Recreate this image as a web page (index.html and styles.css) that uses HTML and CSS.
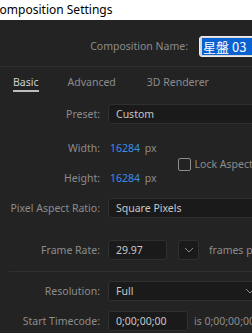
FILE: index.html
```html
<!DOCTYPE html>
<html lang="en">
<head>
  <meta charset="UTF-8" />
  <meta name="viewport" content="width=device-width, initial-scale=1.0"/>
  <title>Composition Settings</title>
  <link rel="stylesheet" href="styles.css">
</head>
<body>
  <header class="titlebar">
    <h1>Composition Settings</h1>
  </header>

  <main class="panel">
    <div class="name-row">
      <label class="name-label">Composition Name:</label>
      <div class="name-input"><span class="selected">星盤 03</span></div>
    </div>

    <nav class="tabs">
      <a class="tab active" href="#">Basic</a>
      <a class="tab" href="#">Advanced</a>
      <a class="tab" href="#">3D Renderer</a>
    </nav>

    <div class="row preset">
      <span class="label">Preset:</span>
      <div class="select wide">Custom</div>
    </div>

    <div class="dims">
      <div class="dims-list">
        <div class="row tall">
          <span class="label">Width:</span>
          <span class="value"><b>16284</b> px</span>
        </div>
        <div class="row tall">
          <span class="label">Height:</span>
          <span class="value"><b>16284</b> px</span>
        </div>
      </div>
      <div class="lock">
        <span class="checkbox"></span>
        <span>Lock Aspect Ratio</span>
      </div>
    </div>

    <div class="row par">
      <span class="label">Pixel Aspect Ratio:</span>
      <div class="select wide">Square Pixels</div>
    </div>

    <div class="row rate">
      <span class="label">Frame Rate:</span>
      <div class="field rate-field">29.97</div>
      <div class="field chev-btn">
        <svg width="10" height="6" viewBox="0 0 10 6"><path d="M1 1 L5 5 L9 1" fill="none" stroke="#8c8c8c" stroke-width="1"/></svg>
      </div>
      <span class="hint">frames per second</span>
    </div>

    <hr class="sep">

    <div class="row res">
      <span class="label">Resolution:</span>
      <div class="select wide">Full
        <svg class="chev" width="10" height="6" viewBox="0 0 10 6"><path d="M1 1 L5 5 L9 1" fill="none" stroke="#8c8c8c" stroke-width="1"/></svg>
      </div>
    </div>

    <div class="row timecode">
      <span class="label">Start Timecode:</span>
      <div class="field tc-field">0;00;00;00</div>
      <span class="hint">is 0;00;00;00 Base 30drop</span>
    </div>
  </main>
</body>
</html>
```

FILE: styles.css
```css
* {
  margin: 0;
  padding: 0;
  box-sizing: border-box;
}

html, body {
  width: 252px;
  height: 333px;
  overflow: hidden;
}

body {
  font-family: 'Noto Sans', 'Noto Sans CJK TC', sans-serif;
  font-size: 10.5px;
  background-color: #232323;
  color: #8c8c8c;
}

.titlebar {
  height: 20px;
  background: #fff;
  overflow: hidden;
}

.titlebar h1 {
  font-weight: normal;
  font-size: 12px;
  color: #000;
  line-height: 19px;
  margin-left: -8px;
  white-space: nowrap;
}

.panel {
  white-space: nowrap;
}

.name-row {
  display: flex;
  align-items: center;
  height: 47px;
  padding-top: 6px;
  border-bottom: 1px solid #2e2e2e;
}

.name-label {
  width: 188px;
  text-align: right;
  flex-shrink: 0;
}

.name-input {
  margin-left: 11px;
  width: 80px;
  flex-shrink: 0;
  height: 21px;
  background: #d6d6d6;
  border: 1px solid #eeeeee;
  border-radius: 3px;
  padding: 1px 2px;
}

.selected {
  display: inline-block;
  background: #0a62d2;
  color: #fff;
  font-size: 13px;
  line-height: 17px;
  padding: 0 6px 0 1px;
  font-family: 'Noto Sans CJK TC', sans-serif;
}

.tabs {
  display: flex;
  height: 37px;
  padding: 8px 0 0 13px;
}

.tab {
  color: #8c8c8c;
  text-decoration: none;
  height: 15px;
  line-height: 15px;
}

.tab + .tab {
  margin-left: 29px;
}

.tab:nth-child(3) {
  margin-left: 31px;
}

.tab.active {
  color: #d0d0d0;
  border-bottom: 2px solid #bdbdbd;
  height: 17px;
}

.row {
  display: flex;
  align-items: center;
  height: 20px;
}

.label {
  width: 100px;
  flex-shrink: 0;
  text-align: right;
  margin-right: 8px;
}

.select, .field {
  height: 20px;
  background: #1a1a1a;
  border: 1px solid #2f2f2f;
  border-radius: 3px;
  color: #c6c6c6;
  padding: 0 7px;
  line-height: 18px;
  flex-shrink: 0;
}

.wide {
  width: 160px;
  position: relative;
}

.chev {
  position: absolute;
  left: 136px;
  top: 6px;
}

.dims {
  display: flex;
  align-items: center;
  margin-top: 9px;
}

.row.tall {
  height: 30px;
}

.value {
  color: #8c8c8c;
  margin-left: 2px;
}

.value b {
  font-weight: normal;
  color: #3a8ee6;
  margin-right: 2px;
}

.lock {
  display: flex;
  align-items: center;
  margin-left: 21px;
  margin-top: 2px;
}

.checkbox {
  width: 13px;
  height: 13px;
  border: 1px solid #8c8c8c;
  border-radius: 2px;
  margin-right: 4px;
}

.par {
  margin-top: 5px;
}

.rate {
  margin-top: 22px;
}

.rate-field {
  width: 59px;
}

.chev-btn {
  width: 21px;
  margin-left: 11px;
  padding: 0;
  display: flex;
  align-items: center;
  justify-content: center;
}

.hint {
  margin-left: 10px;
}

.sep {
  border: none;
  border-top: 1px solid #2f2f2f;
  margin: 11px 0 0 9px;
}

.res {
  margin-top: 9px;
}

.timecode {
  margin-top: 10px;
}

.tc-field {
  width: 80px;
}

.timecode .hint {
  margin-left: 6px;
}
```
